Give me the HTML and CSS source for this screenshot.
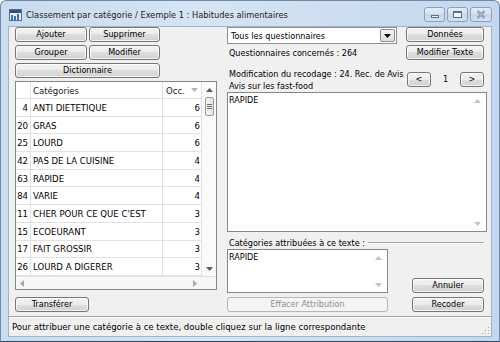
FILE: index.html
```html
<!DOCTYPE html>
<html lang="fr">
<head>
    <meta charset="UTF-8">
    <title>Classement par catégorie</title>
    <link rel="stylesheet" href="styles.css">
</head>
<body>
<div class="window">
    <div class="titlebar">
        <svg class="app-icon" width="13" height="12" viewBox="0 0 13 12">
            <rect x="0.5" y="0.5" width="12" height="11" fill="#e8eef6" stroke="#5a6f8c"/>
            <rect x="1" y="1" width="11" height="3" fill="#2f4f86"/>
            <rect x="2" y="6" width="2" height="5" fill="#3b6fc4"/>
            <rect x="5" y="7" width="2" height="4" fill="#3b6fc4"/>
            <rect x="8" y="5" width="2" height="6" fill="#3b6fc4"/>
        </svg>
        <span class="title">Classement par catégorie / Exemple 1 : Habitudes alimentaires</span>
        <div class="win-buttons">
            <span class="wb wb-min"><i></i></span>
            <span class="wb wb-max"><i></i></span>
            <span class="wb wb-close">
                <svg width="10" height="9" viewBox="0 0 10 9"><path d="M1.5 1 L8.5 8 M8.5 1 L1.5 8" stroke="#6c7e95" stroke-width="2.2" fill="none"/><path d="M1.5 1 L8.5 8 M8.5 1 L1.5 8" stroke="#e9eff7" stroke-width="0.8" fill="none"/></svg>
            </span>
        </div>
    </div>

    <div class="client">
        <div class="main">
            <!-- colonne gauche -->
            <div class="left">
                <div class="btn-grid">
                    <button class="btn">Ajouter</button>
                    <button class="btn">Supprimer</button>
                    <button class="btn">Grouper</button>
                    <button class="btn">Modifier</button>
                    <button class="btn span2">Dictionnaire</button>
                </div>

                <div class="grid">
                    <div class="grid-body">
                        <div class="grid-cols">
                            <div class="row head">
                                <span class="c-num"></span>
                                <span class="c-cat">Catégories</span>
                                <span class="c-occ">Occ.<svg class="sort" width="7" height="4" viewBox="0 0 7 4"><path d="M0 0 H7 L3.5 4 Z" fill="#b4b4b4"/></svg></span>
                            </div>
                            <div class="row"><span class="c-num">4</span><span class="c-cat">ANTI DIETETIQUE</span><span class="c-occ">6</span></div>
                            <div class="row"><span class="c-num">20</span><span class="c-cat">GRAS</span><span class="c-occ">6</span></div>
                            <div class="row"><span class="c-num">25</span><span class="c-cat">LOURD</span><span class="c-occ">6</span></div>
                            <div class="row"><span class="c-num">42</span><span class="c-cat">PAS DE LA CUISINE</span><span class="c-occ">4</span></div>
                            <div class="row"><span class="c-num">63</span><span class="c-cat">RAPIDE</span><span class="c-occ">4</span></div>
                            <div class="row"><span class="c-num">84</span><span class="c-cat">VARIE</span><span class="c-occ">4</span></div>
                            <div class="row"><span class="c-num">11</span><span class="c-cat">CHER POUR CE QUE C'EST</span><span class="c-occ">3</span></div>
                            <div class="row"><span class="c-num">15</span><span class="c-cat">ECOEURANT</span><span class="c-occ">3</span></div>
                            <div class="row"><span class="c-num">17</span><span class="c-cat">FAIT GROSSIR</span><span class="c-occ">3</span></div>
                            <div class="row"><span class="c-num">26</span><span class="c-cat">LOURD A DIGERER</span><span class="c-occ">3</span></div>
                        </div>
                        <div class="vscroll">
                            <svg class="arr" width="7" height="4" viewBox="0 0 7 4"><path d="M0 4 H7 L3.5 0 Z" fill="#5e5e5e"/></svg>
                            <div class="thumb"><i></i><i></i><i></i></div>
                            <svg class="arr down" width="7" height="4" viewBox="0 0 7 4"><path d="M0 0 H7 L3.5 4 Z" fill="#5e5e5e"/></svg>
                        </div>
                    </div>
                    <div class="hscroll">
                        <div class="htrack">
                            <svg width="4" height="7" viewBox="0 0 4 7"><path d="M4 0 V7 L0 3.5 Z" fill="#a8a8a8"/></svg>
                            <svg width="4" height="7" viewBox="0 0 4 7"><path d="M0 0 V7 L4 3.5 Z" fill="#a8a8a8"/></svg>
                        </div>
                        <div class="corner"></div>
                    </div>
                </div>

                <button class="btn transfer">Transférer</button>
            </div>

            <!-- colonne droite -->
            <div class="right">
                <div class="top-grid">
                    <div class="combo">
                        <span class="combo-text">Tous les questionnaires</span>
                        <span class="combo-btn"><svg width="7" height="4" viewBox="0 0 7 4"><path d="M0 0 H7 L3.5 4 Z" fill="#000"/></svg></span>
                    </div>
                    <button class="btn">Données</button>
                    <span class="label">Questionnaires concernés : 264</span>
                    <button class="btn">Modifier Texte</button>
                </div>

                <div class="recode">
                    <div class="recode-label">
                        <div>Modification du recodage : 24. Rec. de Avis</div>
                        <div>Avis sur les fast-food</div>
                    </div>
                    <div class="nav">
                        <button class="btn nav-btn">&lt;</button>
                        <span class="nav-num">1</span>
                        <button class="btn nav-btn">&gt;</button>
                    </div>
                </div>

                <div class="textbox big">
                    <div class="textbox-text">RAPIDE</div>
                    <div class="tb-scroll">
                        <svg width="7" height="4" viewBox="0 0 7 4"><path d="M0 4 H7 L3.5 0 Z" fill="#c2c2c2"/></svg>
                        <svg width="7" height="4" viewBox="0 0 7 4"><path d="M0 0 H7 L3.5 4 Z" fill="#c2c2c2"/></svg>
                    </div>
                </div>

                <div class="group-head">
                    <span>Catégories attribuées à ce texte :</span>
                    <span class="group-line"></span>
                </div>

                <div class="bottom-grid">
                    <div class="textbox small">
                        <div class="textbox-text">RAPIDE</div>
                        <div class="tb-scroll">
                            <svg width="7" height="4" viewBox="0 0 7 4"><path d="M0 4 H7 L3.5 0 Z" fill="#c2c2c2"/></svg>
                            <svg width="7" height="4" viewBox="0 0 7 4"><path d="M0 0 H7 L3.5 4 Z" fill="#c2c2c2"/></svg>
                        </div>
                    </div>
                    <button class="btn side-btn">Annuler</button>
                    <button class="btn" disabled>Effacer Attribution</button>
                    <button class="btn side-btn">Recoder</button>
                </div>
            </div>
        </div>

        <div class="status">
            <span>Pour attribuer une catégorie à ce texte, double cliquez sur la ligne correspondante</span>
            <svg class="grip" width="9" height="9" viewBox="0 0 9 9">
                <rect x="7" y="1" width="1" height="1" fill="#a9a9a9"/>
                <rect x="4" y="4" width="1" height="1" fill="#a9a9a9"/>
                <rect x="7" y="4" width="1" height="1" fill="#a9a9a9"/>
                <rect x="1" y="7" width="1" height="1" fill="#a9a9a9"/>
                <rect x="4" y="7" width="1" height="1" fill="#a9a9a9"/>
                <rect x="7" y="7" width="1" height="1" fill="#a9a9a9"/>
            </svg>
        </div>
    </div>
</div>
</body>
</html>
```

FILE: styles.css
```css
* {
    box-sizing: border-box;
}
body {
    margin: 0;
    font-family: "DejaVu Sans Condensed", "DejaVu Sans", sans-serif;
    font-size: 9px;
    color: #000;
    background: #fff;
}
.window {
    width: 500px;
    height: 342px;
    display: flex;
    flex-direction: column;
    padding: 0 7px 4px 7px;
    border: 1px solid #7189a8;
    border-bottom-color: #2d4566;
    border-radius: 6px 6px 0 0;
    background: linear-gradient(90deg, #c9dbef, #d6e4f3 40%, #c4d7ed);
}

/* barre de titre */
.titlebar {
    height: 25px;
    display: flex;
    align-items: center;
}
.app-icon {
    margin: 2px 0 0 1px;
}
.title {
    margin: 2px 0 0 4px;
    font-size: 9.2px;
    color: #1c1c1c;
    white-space: nowrap;
}
.win-buttons {
    margin-left: auto;
    align-self: flex-start;
    margin-top: 6px;
    display: flex;
    gap: 2px;
}
.wb {
    width: 21px;
    height: 15px;
    display: flex;
    align-items: center;
    justify-content: center;
    border: 1px solid #8aa1bd;
    border-radius: 3px;
    background: linear-gradient(#e4edf7, #d2dfee 50%, #c6d6ea 50%, #d3e1f0);
}
.wb-close {
    width: 22px;
}
.wb-min i {
    width: 8px;
    height: 3px;
    margin-top: 4px;
    border: 1px solid #5d6e84;
    background: #f4f7fb;
}
.wb-max i {
    width: 9px;
    height: 7px;
    border: 1px solid #5d6e84;
    border-top-width: 2px;
    background: #f4f7fb;
}

/* zone client */
.client {
    flex: 1;
    display: flex;
    flex-direction: column;
    padding: 0 4px 0 6px;
    background: #f0f0f0;
    border: 1px solid #9fb3ca;
}
.main {
    height: 285px;
    display: flex;
    gap: 10px;
}
.left {
    width: 202px;
    display: flex;
    flex-direction: column;
}
.right {
    width: 260px;
    display: flex;
    flex-direction: column;
}

/* boutons */
.btn {
    height: 15px;
    padding: 0;
    font: inherit;
    line-height: 13px;
    color: #000;
    border: 1px solid #777;
    border-radius: 3px;
    background: linear-gradient(#f3f3f3, #ebebeb 50%, #dedede 50%, #d2d2d2);
    box-shadow: inset 0 0 0 1px rgba(255, 255, 255, 0.7);
    white-space: nowrap;
}
.btn:disabled {
    color: #8f8f8f;
    border-color: #b3b7ba;
    background: #f4f4f4;
    box-shadow: none;
}
.btn-grid {
    display: grid;
    grid-template-columns: 72px 71px;
    grid-auto-rows: 15px;
    column-gap: 2px;
    row-gap: 3px;
}
.span2 {
    grid-column: 1 / -1;
}
.transfer {
    width: 74px;
    margin-top: 7px;
}

/* tableau des catégories */
.grid {
    height: 209px;
    margin-top: 3px;
    display: flex;
    flex-direction: column;
    background: #fff;
    border: 1px solid #828790;
}
.grid-body {
    height: 194px;
    display: flex;
    overflow: hidden;
}
.grid-cols {
    width: 185px;
}
.row {
    height: 17.7px;
    display: flex;
    align-items: center;
    border-bottom: 1px solid #e1e1e1;
    font-size: 9.5px;
}
.row.head {
    height: 17px;
    color: #222;
}
.row span {
    height: 100%;
    display: flex;
    align-items: center;
    white-space: nowrap;
}
.c-num {
    width: 15px;
    justify-content: flex-end;
    padding-right: 2px;
    border-right: 1px solid #e1e1e1;
}
.c-cat {
    width: 132px;
    padding-left: 2px;
    border-right: 1px solid #e1e1e1;
}
.c-occ {
    width: 38px;
    justify-content: flex-end;
    padding-right: 1px;
}
.head .c-occ {
    justify-content: flex-start;
    padding-left: 3px;
}
.sort {
    margin-left: 6px;
}
.vscroll {
    width: 15px;
    display: flex;
    flex-direction: column;
    align-items: center;
    background: #fafafa;
    border-left: 1px solid #e1e1e1;
}
.vscroll .arr {
    margin-top: 6px;
}
.vscroll .arr.down {
    margin-top: auto;
    margin-bottom: 5px;
}
.thumb {
    width: 9px;
    height: 19px;
    margin-top: 5px;
    display: flex;
    flex-direction: column;
    align-items: center;
    justify-content: center;
    gap: 1px;
    border: 1px solid #9a9a9a;
    border-radius: 2px;
    background: linear-gradient(90deg, #f4f4f4, #e2e2e2);
}
.thumb i {
    width: 5px;
    height: 1px;
    background: #6e6e6e;
}
.hscroll {
    flex: 1;
    display: flex;
    border-top: 1px solid #e1e1e1;
}
.htrack {
    flex: 1;
    display: flex;
    align-items: center;
    justify-content: space-between;
    padding: 0 4px 0 4px;
    background: #f7f7f7;
}
.corner {
    width: 15px;
    background: #f7f7f7;
}

/* partie droite */
.top-grid {
    display: grid;
    grid-template-columns: 1fr 78px;
    grid-template-rows: 18px 15px;
    align-items: start;
    margin-right: 3px;
}
.combo {
    width: 170px;
    height: 17px;
    display: flex;
    align-items: center;
    background: #fff;
    border: 1px solid #8e8f8f;
}
.combo-text {
    flex: 1;
    padding-left: 3px;
}
.combo-btn {
    width: 15px;
    height: 13px;
    margin-right: 1px;
    display: flex;
    align-items: center;
    justify-content: center;
    border: 1px solid #8c8c8c;
    border-radius: 2px;
    background: linear-gradient(#f4f4f4, #dcdcdc);
}
.label {
    align-self: center;
    padding-left: 2px;
}
.recode {
    margin-top: 8px;
    display: flex;
    justify-content: space-between;
}
.recode-label {
    padding-left: 2px;
    line-height: 12px;
    white-space: nowrap;
}
.nav {
    margin: 4px 3px 0 0;
    display: flex;
}
.nav-btn {
    width: 24px;
}
.nav-num {
    width: 29px;
    text-align: center;
    line-height: 15px;
}
.textbox {
    display: flex;
    background: #fff;
    border: 1px solid #828790;
}
.textbox.big {
    height: 140px;
}
.textbox-text {
    flex: 1;
    padding: 1px 0 0 1px;
    line-height: 12px;
}
.tb-scroll {
    width: 17px;
    display: flex;
    flex-direction: column;
    align-items: center;
    justify-content: space-between;
    padding: 6px 0 5px;
}
.group-head {
    height: 17px;
    display: flex;
    align-items: center;
    padding: 5px 3px 0 2px;
}
.group-line {
    flex: 1;
    height: 2px;
    margin: 0 0 1px 3px;
    border-top: 1px solid #a8a8a8;
    border-bottom: 1px solid #fff;
}
.bottom-grid {
    display: grid;
    grid-template-columns: 161px 1fr;
    grid-template-rows: 44px 15px;
    row-gap: 4px;
}
.side-btn {
    width: 72px;
    justify-self: end;
    align-self: end;
    margin-right: 3px;
}

/* barre d'état */
.status {
    flex: 1;
    margin: 4px -4px 0 -6px;
    display: flex;
    align-items: center;
    padding-left: 3px;
    font-size: 9.5px;
    border-top: 1px solid #a0a0a0;
    box-shadow: inset 0 1px 0 #fff;
}
.grip {
    margin: auto 1px 1px auto;
}
```
